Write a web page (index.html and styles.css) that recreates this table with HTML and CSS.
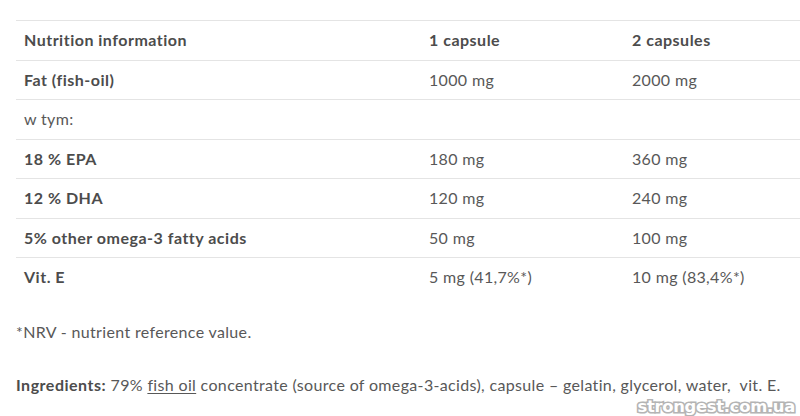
FILE: index.html
```html
<!DOCTYPE html>
<html>
<head>
<meta charset="utf-8">
<link rel="stylesheet" href="styles.css">
</head>
<body>
<div class="page">
  <table class="nutri">
    <tr class="head"><td>Nutrition information</td><td>1 capsule</td><td>2 capsules</td></tr>
    <tr><td class="b">Fat (fish-oil)</td><td>1000 mg</td><td>2000 mg</td></tr>
    <tr><td>w tym:</td><td></td><td></td></tr>
    <tr><td class="b">18 % EPA</td><td>180 mg</td><td>360 mg</td></tr>
    <tr><td class="b">12 % DHA</td><td>120 mg</td><td>240 mg</td></tr>
    <tr><td class="b">5% other omega-3 fatty acids</td><td>50 mg</td><td>100 mg</td></tr>
    <tr class="last"><td class="b">Vit. E</td><td>5 mg (41,7%*)</td><td>10 mg (83,4%*)</td></tr>
  </table>
  <p class="note">*NRV - nutrient reference value.</p>
  <p class="ingr"><b>Ingredients:</b> 79% <u>fish oil</u> concentrate (source of omega-3-acids), capsule – gelatin, glycerol, water,&nbsp; vit. E.</p>
</div>
<div class="watermark">strongest.com.ua</div>
</body>
</html>
```
FILE: styles.css
```css
html, body {
  margin: 0;
  padding: 0;
  background: #fff;
  overflow: hidden;
  width: 800px;
  height: 416px;
}
.page {
  padding: 20px 0 0 16px;
  font-family: Lato, "Open Sans", sans-serif;
  font-size: 16px;
  letter-spacing: 0.34px;
  font-variant-ligatures: none;
  color: #585858;
}
.nutri {
  width: 810px;
  border-collapse: collapse;
  table-layout: fixed;
}
.nutri td {
  border-top: 1px solid #e4e4e4;
  height: 38.5px;
  padding: 0 8px;
  vertical-align: middle;
  line-height: 18px;
}
.nutri td:nth-child(1) { width: 389px; }
.nutri td:nth-child(2) { width: 187px; }
.nutri .head td, .nutri td.b {
  font-weight: bold;
  color: #4c4c4c;
  letter-spacing: 0.5px;
}
.note {
  margin: 26px 0 0 0;
  line-height: 18px;
}
.ingr {
  margin: 35px 0 0 0;
  line-height: 18px;
}
.ingr b { color: #4c4c4c; letter-spacing: 0.5px; }
.ingr u { text-underline-offset: 2px; }
.watermark {
  position: absolute;
  right: 5px;
  top: 397px;
  font-family: "DejaVu Sans", sans-serif;
  font-weight: bold;
  font-size: 16.4px;
  letter-spacing: -0.3px;
  color: #fff;
  -webkit-text-stroke: 3.2px #b4b4b4;
  paint-order: stroke fill;
}
```
